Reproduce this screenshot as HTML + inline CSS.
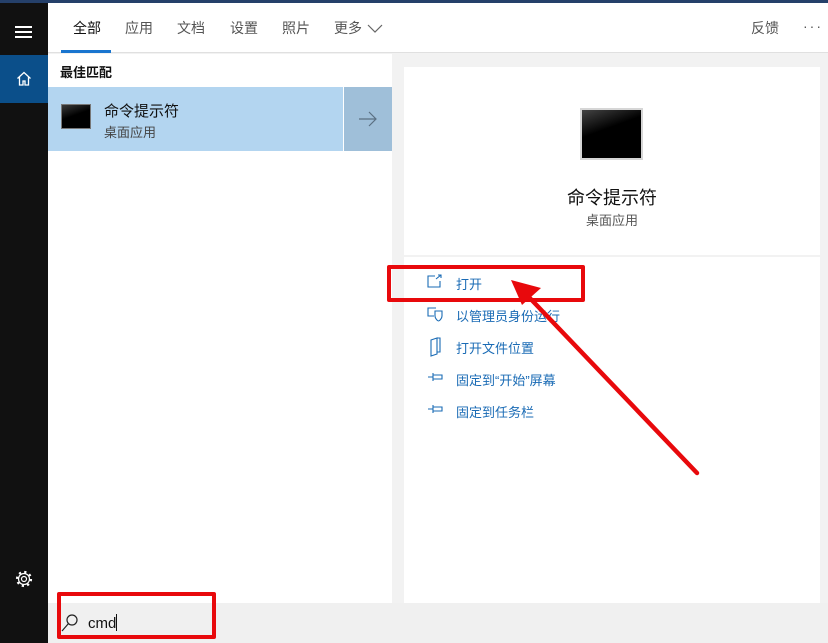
<!DOCTYPE html>
<html><head><meta charset="utf-8"><style>
*{margin:0;padding:0;box-sizing:border-box}
body{width:828px;height:643px;position:relative;overflow:hidden;background:#f2f2f2;font-family:"Liberation Sans","Noto Sans CJK SC",sans-serif}
.a{position:absolute}
.nav span{position:absolute;top:18px;font-size:14px;color:#555}
.al{position:absolute;left:456px;font-size:13px;color:#1a6bb5}
</style></head><body>
<div class="a" style="left:0;top:0;width:828px;height:3px;background:#25406a"></div>
<div class="a" style="left:0;top:3px;width:48px;height:640px;background:#111"></div>
<div class="a" style="left:15px;top:26px;width:17px;height:1.5px;background:#fff"></div>
<div class="a" style="left:15px;top:31px;width:17px;height:1.5px;background:#fff"></div>
<div class="a" style="left:15px;top:36px;width:17px;height:1.5px;background:#fff"></div>
<div class="a" style="left:0;top:55px;width:48px;height:48px;background:#0b4f8a"></div>
<svg class="a" style="left:16px;top:71px" width="16" height="16" viewBox="0 0 16 16"><path d="M1.5 7.5L8 1.5l6.5 6M3.5 6v8h3.5v-4h2v4h3.5V6" fill="none" stroke="#fff" stroke-width="1.3"/></svg>
<svg class="a" style="left:15px;top:570px" width="18" height="18" viewBox="0 0 18 18"><circle cx="9" cy="9" r="2.5" fill="none" stroke="#fff" stroke-width="1.2"/><circle cx="9" cy="9" r="5.5" fill="none" stroke="#fff" stroke-width="1.2"/><circle cx="9" cy="9" r="7" fill="none" stroke="#fff" stroke-width="2.2" stroke-dasharray="2.2 3.3"/></svg>
<div class="a" style="left:48px;top:3px;width:780px;height:50px;background:#fff;border-bottom:1px solid #e0e0e0"></div>
<div class="nav">
<span style="left:73px;color:#111">全部</span>
<span style="left:125px">应用</span><span style="left:177px">文档</span><span style="left:230px">设置</span><span style="left:282px">照片</span><span style="left:334px">更多</span>
<svg class="a" style="left:367px;top:24px" width="16" height="10"><path d="M1 1l7 7 7-7" fill="none" stroke="#666" stroke-width="1.2"/></svg>
<span style="left:751px">反馈</span><span style="left:803px;top:18px;letter-spacing:2px">···</span>
</div>
<div class="a" style="left:61px;top:50px;width:50px;height:3px;background:#1a75cf"></div>
<div class="a" style="left:48px;top:54px;width:344px;height:549px;background:#fff"></div>
<div class="a" style="left:60px;top:62px;font-size:13px;font-weight:bold;color:#111">最佳匹配</div>
<div class="a" style="left:48px;top:87px;width:295px;height:64px;background:#b3d5f0"></div>
<div class="a" style="left:344px;top:87px;width:48px;height:64px;background:#9fbfd9"></div>
<svg class="a" style="left:358px;top:111px" width="20" height="16"><path d="M1 8h17M11 1l7 7-7 7" fill="none" stroke="#5a6f82" stroke-width="1.2"/></svg>
<div class="a" style="left:61px;top:104px;width:30px;height:25px;background:linear-gradient(160deg,#3a3a3a,#000 45%);border:1px solid #777"></div>
<div class="a" style="left:104px;top:100px;font-size:15px;color:#111">命令提示符</div>
<div class="a" style="left:104px;top:122px;font-size:13px;color:#444">桌面应用</div>
<div class="a" style="left:404px;top:67px;width:416px;height:536px;background:#fff"></div>
<div class="a" style="left:404px;top:255px;width:416px;height:2px;background:#f2f2f2"></div>
<div class="a" style="left:580px;top:108px;width:63px;height:52px;background:linear-gradient(160deg,#444,#000 40%);border:2px solid #d6d6d6"></div>
<div class="a" style="left:404px;top:184px;width:416px;text-align:center;font-size:18px;color:#111">命令提示符</div>
<div class="a" style="left:404px;top:210px;width:416px;text-align:center;font-size:13px;color:#555">桌面应用</div>
<svg class="a" style="left:426px;top:273px" width="18" height="150" viewBox="0 0 18 150" fill="none" stroke="#1a6bb5" stroke-width="1.1">
<path d="M9 3H2v11h12V8M10 6l5-4M12 2h3v3"/>
<path d="M10 35H2v8h6M9 38h7v5c0 3-3 5-3.5 5S9 46 9 43z"/>
<path d="M5 67l6-2v16l-6 2zM5 67v14M11 65h3v14h-3"/>
<path d="M2 104h5M7 100v8M7 102h9v4H7"/>
<path d="M2 136h5M7 132v8M7 134h9v4H7"/>
</svg>
<div class="al" style="top:274px">打开</div>
<div class="al" style="top:306px">以管理员身份运行</div>
<div class="al" style="top:338px">打开文件位置</div>
<div class="al" style="top:370px">固定到“开始”屏幕</div>
<div class="al" style="top:402px">固定到任务栏</div>
<div class="a" style="left:0;top:603px;width:828px;height:40px;background:#f0f0f0"></div>
<div class="a" style="left:0;top:603px;width:48px;height:40px;background:#111"></div>
<svg class="a" style="left:61px;top:613px" width="18" height="20"><circle cx="11" cy="7" r="5" fill="none" stroke="#222" stroke-width="1.2"/><path d="M7.5 10.5L1 18" stroke="#222" stroke-width="1.2"/></svg>
<div class="a" style="left:88px;top:614px;font-size:15px;color:#111">cmd<span style="display:inline-block;width:1px;height:17px;background:#111;vertical-align:-3px"></span></div>
<div class="a" style="left:57px;top:592px;width:159px;height:47px;border:4px solid #e8090c;border-radius:2px"></div>
<div class="a" style="left:387px;top:265px;width:198px;height:37px;border:4px solid #e8090c;border-radius:2px"></div>
<svg class="a" style="left:0;top:0" width="828" height="643"><path d="M697 473L525 293" stroke="#e8090c" stroke-width="4.5" stroke-linecap="round"/><path d="M511 280l30 8-19 17z" fill="#e8090c"/></svg>
</body></html>
